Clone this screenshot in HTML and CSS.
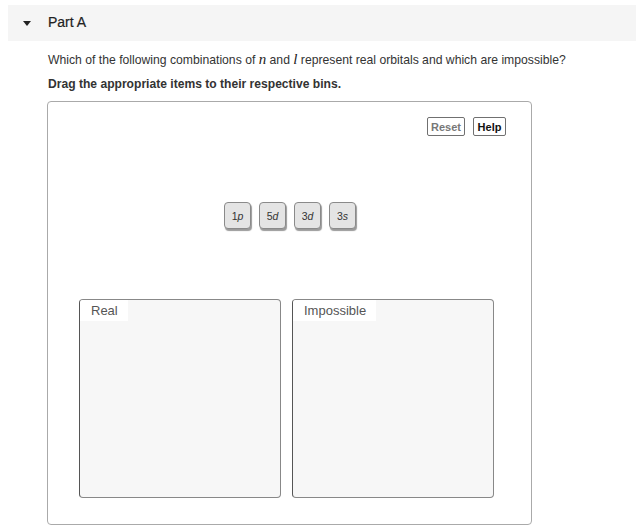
FILE: index.html
```html
<!DOCTYPE html>
<html>
<head>
<meta charset="utf-8">
<link rel="stylesheet" href="styles.css">
</head>
<body>
<div class="part-header">
  <span class="caret"></span>
  <span class="part-title">Part A</span>
</div>
<div class="content">
  <p class="question">Which of the following combinations of <span class="math">n</span> and <span class="math">l</span> represent real orbitals and which are impossible?</p>
  <p class="instruction">Drag the appropriate items to their respective bins.</p>
  <div class="workspace">
    <div class="toolbar">
      <button class="tbtn reset">Reset</button>
      <button class="tbtn help">Help</button>
    </div>
    <div class="items">
      <div class="item">1<i>p</i></div>
      <div class="item">5<i>d</i></div>
      <div class="item">3<i>d</i></div>
      <div class="item">3<i>s</i></div>
    </div>
    <div class="bins">
      <div class="bin"><div class="bin-label">Real</div></div>
      <div class="bin"><div class="bin-label">Impossible</div></div>
    </div>
  </div>
</div>
</body>
</html>
```
FILE: styles.css
```css
html, body {
  margin: 0;
  padding: 0;
  background: #ffffff;
  font-family: "Liberation Sans", Arial, sans-serif;
  color: #333333;
}
.part-header {
  margin: 5px 0 0 8px;
  height: 36px;
  background: #f5f5f5;
  display: flex;
  align-items: center;
}
.caret {
  width: 0;
  height: 0;
  border-left: 4px solid transparent;
  border-right: 4px solid transparent;
  border-top: 5px solid #222222;
  margin-left: 15px;
  margin-top: 1px;
}
.part-title {
  margin-left: 17px;
  font-size: 14px;
  color: #222222;
  margin-top: -2px;
  -webkit-text-stroke: 0.2px #222222;
}
.content {
  padding-left: 47px;
}
.question {
  margin: 11px 0 0 1px;
  font-size: 12.2px;
  line-height: 14px;
  color: #333333;
}
.math {
  font-family: "Liberation Serif", "Times New Roman", serif;
  font-style: italic;
  font-size: 15px;
  color: #222222;
}
.instruction {
  margin: 10px 0 0 1px;
  font-size: 12.1px;
  line-height: 14px;
  font-weight: bold;
  color: #333333;
}
.workspace {
  margin-top: 10px;
  width: 483px;
  height: 422px;
  border: 1px solid #aaaaaa;
  border-radius: 4px;
  display: flex;
  flex-direction: column;
}
.toolbar {
  display: flex;
  justify-content: flex-end;
  gap: 8px;
  padding: 15px 25px 0 0;
}
.tbtn {
  font-family: "Liberation Sans", Arial, sans-serif;
  font-size: 11px;
  font-weight: bold;
  height: 19px;
  padding: 0 3px;
  background: #ffffff;
  border: 1px solid #707070;
  border-radius: 2px;
  line-height: 16px;
}
.reset {
  color: #777777;
  width: 38px;
}
.help {
  color: #111111;
  width: 33px;
}
.items {
  display: flex;
  justify-content: center;
  gap: 8px;
  margin-top: 66px;
  padding-left: 1px;
}
.item {
  width: 27px;
  height: 27px;
  box-sizing: border-box;
  background: #e4e4e4;
  border: 1px solid #8a8a8a;
  border-radius: 4px;
  box-shadow: 1px 2px 1px #9a9a9a;
  font-size: 10.5px;
  color: #333333;
  display: flex;
  align-items: center;
  justify-content: center;
}
.item i {
  font-style: italic;
}
.bins {
  display: flex;
  gap: 11px;
  margin-top: 70px;
  padding-left: 31px;
}
.bin {
  width: 202px;
  height: 199px;
  box-sizing: border-box;
  background: #f7f7f7;
  border: 1px solid #888888;
  border-left-color: #555555;
  border-radius: 4px;
}
.bin-label {
  display: inline-block;
  background: #ffffff;
  padding: 4px 10px 3px 11px;
  font-size: 13px;
  line-height: 14px;
  color: #555555;
  border-top-left-radius: 3px;
}
```
